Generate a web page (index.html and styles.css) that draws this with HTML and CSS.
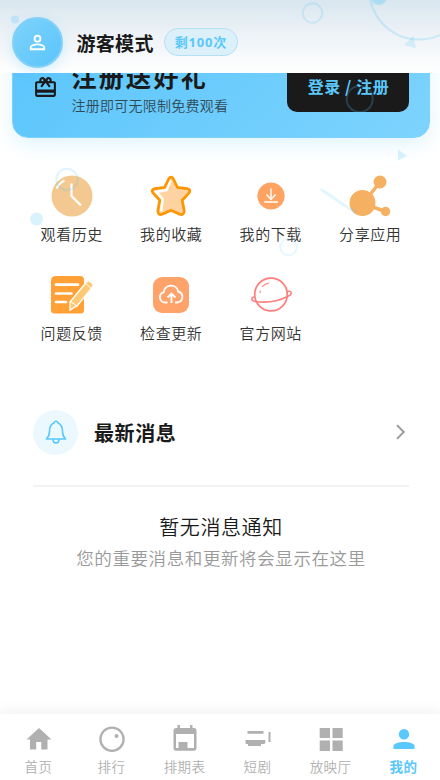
FILE: index.html
```html
<!DOCTYPE html>
<html lang="zh-CN">
<head>
<meta charset="utf-8">
<meta name="viewport" content="width=device-width, initial-scale=1">
<title>我的</title>
<link rel="stylesheet" href="styles.css">
</head>
<body>
<div class="app">
  <header class="header">
    <div class="avatar">
      <svg width="23" height="23" viewBox="0 0 24 24" fill="#fff"><path d="M12 5.9a2.1 2.1 0 1 1 0 4.2 2.1 2.1 0 0 1 0-4.2m0 9c2.97 0 6.1 1.46 6.1 2.1v1.1H5.9V17c0-.64 3.13-2.1 6.1-2.1M12 4a4 4 0 1 0 0 8 4 4 0 0 0 0-8m0 9c-2.67 0-8 1.34-8 4v3h16v-3c0-2.66-5.33-4-8-4"/></svg>
    </div>
    <h1 class="username">游客模式</h1>
    <span class="quota">剩100次</span>
  </header>

  <main class="content">
    <section class="banner">
      <svg class="gift" width="25" height="25" viewBox="0 0 24 24" fill="#1a1a1a"><path d="M20 6h-2.180c.11-.31.18-.65.18-1a3 3 0 0 0-5.500-1.650l-.5.67-.5-.68A3 3 0 0 0 6 5c0 .35.07.69.18 1H4c-1.110 0-1.990.89-1.990 2L2 19c0 1.110.89 2 2 2h16c1.110 0 2-.89 2-2V8c0-1.110-.89-2-2-2m-5-2c.55 0 1 .45 1 1s-.45 1-1 1-1-.45-1-1 .45-1 1-1M9 4c.55 0 1 .45 1 1s-.45 1-1 1-1-.45-1-1 .45-1 1-1m11 15H4v-2h16zm0-5H4V8h5.080L7 10.830 8.620 12 12 7.400l3.380 4.600L17 10.830 14.920 8H20z"/></svg>
      <div class="offer">
        <h2 class="offer-title">注册送好礼</h2>
        <p class="offer-text">注册即可无限制免费观看</p>
      </div>
      <button class="login">登录 / 注册</button>
    </section>

    <section class="menu">
      <div class="menu-item">
        <svg width="42" height="42" viewBox="0 0 42 42"><circle cx="21" cy="21" r="20.500" fill="#f3c891"/><path d="M20.500 8.500V21l9.500 9.500" fill="none" stroke="#fff" stroke-width="2.200"/><path d="M5.500 13.500Q8.500 8 13.500 5.500" fill="none" stroke="#fff" stroke-width="2"/></svg>
        <span>观看历史</span>
      </div>
      <div class="menu-item">
        <svg width="42" height="42" viewBox="-.5 -.5 43 43"><path d="M18.700 3.300Q21 0 23.300 3.300L27.500 12.200 37.500 13.500Q42 14.500 39.300 18L32.500 25.300 34.500 36Q34.500 41 30 39.700L21 35.500 12 39.700Q7.500 41 7.500 36L9.500 25.300 2.700 18Q0 14.500 4.500 13.500L14.500 12.200Z" fill="#ffd2a2"/><path d="M20.500 5L16.300 15 6 16.800 12.500 24.500 10.800 36.500" fill="none" stroke="#fff" stroke-width="2.800"/><path d="M18.700 3.300Q21 0 23.300 3.300L27.500 12.200 37.500 13.500Q42 14.500 39.300 18L32.500 25.300 34.500 36Q34.500 41 30 39.700L21 35.500 12 39.700Q7.500 41 7.500 36L9.500 25.300 2.700 18Q0 14.500 4.500 13.500L14.500 12.200Z" fill="none" stroke="#ff9500" stroke-width="2.800" stroke-linejoin="round"/></svg>
        <span>我的收藏</span>
      </div>
      <div class="menu-item">
        <svg width="42" height="42" viewBox="0 0 42 42"><circle cx="21" cy="21" r="13.600" fill="#ffa362"/><path d="M21 13.500V23.500M16.500 19.500L21 24.500 25.500 19.500M14.200 27H28" fill="none" stroke="#fff" stroke-width="1.400"/></svg>
        <span>我的下载</span>
      </div>
      <div class="menu-item">
        <svg width="42" height="42" viewBox="0 0 42 42"><path d="M14 28.500L31 7M14 28.500L36.500 36.500" stroke="#f5b061" stroke-width="3.500"/><circle cx="13.500" cy="28" r="13" fill="#f5b061"/><circle cx="31" cy="7" r="6.500" fill="#f5b061"/><circle cx="36.500" cy="36.500" r="4.700" fill="#f5b061"/></svg>
        <span>分享应用</span>
      </div>
      <div class="menu-item">
        <svg width="42" height="42" viewBox="0 0 42 42"><path d="M5 2H29Q33 2 33 6V36Q33 39.500 29.500 39.500H3.500Q0 39.500 0 36V7Q0 2 5 2" fill="#ffa136"/><path d="M5 10.700H27M5 19.500H20.500M5 28H15" stroke="#fff" stroke-width="2.700" stroke-linecap="round"/><path d="M19 28L35.500 8Q37 6 39 7.500L41 9Q43 11 41.500 13L26.500 31.500 19 36Z" fill="#ffc873" stroke="#fff" stroke-width="1.300"/><path d="M19.300 27.500L26.500 32M34.500 9.500L40.500 14.500" stroke="#fff" stroke-width="1"/></svg>
        <span>问题反馈</span>
      </div>
      <div class="menu-item">
        <svg width="42" height="42" viewBox="0 0 42 42"><rect x="3" y="3" width="36" height="36" rx="9" fill="#ffa36b"/><path d="M17.500 28.500H15.500A5.300 5.300 0 0 1 13.800 18.100C14.500 9.800 26.700 9.400 28.200 17.500A5.600 5.600 0 0 1 27 28.500H25M21.500 29V20M17.600 23.500L21.500 19.500 25.400 23.500" fill="none" stroke="#fff" stroke-width="1.900"/></svg>
        <span>检查更新</span>
      </div>
      <div class="menu-item">
        <svg width="42" height="42" viewBox="0 0 42 42" fill="none" stroke="#ff7d7b"><circle cx="21" cy="20.500" r="16.300" stroke-width="1.700"/><path d="M5 23C1 22.500.5 27 5 27.500Q23 30 37.500 22.500C43 20.500 42 15.500 37 18" stroke-width="1.500"/><path d="M12 13Q15 9.500 19 9M10 19L10.300 16.500" stroke-width="1.100"/></svg>
        <span>官方网站</span>
      </div>
    </section>

    <section class="news">
      <div class="news-head">
        <div class="bell">
          <svg width="24" height="26" viewBox="0 0 24 26" fill="none" stroke="#5ac8fa" stroke-width="1.600" stroke-linejoin="round"><path d="M12 2.200C13.300 2.200 13.800 3 14 4 17.500 5.300 18.500 8.500 18.500 12.500 18.500 16 19 17.500 21.500 20H2.500C5 17.500 5.500 16 5.500 12.500 5.500 8.500 6.500 5.300 10 4 10.200 3 10.700 2.200 12 2.200ZM9 20.500C9 25 15 25 15 20.500"/></svg>
        </div>
        <h2 class="news-title">最新消息</h2>
        <svg class="chevron" width="10" height="16" viewBox="0 0 10 16" fill="none" stroke="#999" stroke-width="1.900"><path d="M1 1.200L7.800 8 1 14.800"/></svg>
      </div>
      <div class="empty">
        <p class="empty-title">暂无消息通知</p>
        <p class="empty-text">您的重要消息和更新将会显示在这里</p>
      </div>
    </section>
  </main>

  <nav class="tabs">
    <div class="tab">
      <svg width="30" height="30" viewBox="0 0 30 30" fill="currentColor"><path d="M15 4L2.500 15.500H6V25.500H12.200V18H17.300V25.500H23.500V15.500H27.500Z"/></svg>
      <span>首页</span>
    </div>
    <div class="tab">
      <svg width="30" height="30" viewBox="0 0 30 30"><circle cx="15" cy="15.200" r="11.600" fill="none" stroke="currentColor" stroke-width="2.300"/><circle cx="19.500" cy="12" r="2" fill="currentColor"/></svg>
      <span>排行</span>
    </div>
    <div class="tab">
      <svg width="30" height="30" viewBox="0 0 30 30" fill="currentColor" fill-rule="evenodd"><path d="M7.500 1H10V4H20V1H22.500V4H24Q26.500 4 26.500 6.500V24Q26.500 26.700 24 26.700H6Q3.500 26.700 3.500 24V6.500Q3.500 4 6 4H7.500ZM6 10V24H24V10Z"/><path d="M8.500 18H17.500V24.500H8.500Z"/></svg>
      <span>排期表</span>
    </div>
    <div class="tab">
      <svg width="30" height="30" viewBox="0 0 30 30" fill="currentColor"><path d="M4.500 7H20.500V9.700H4.500ZM2.500 16H22.300V18.500L21.500 20H18V22H5V20H3L2.500 19ZM25.500 8H27.500V18H25.500Z"/></svg>
      <span>短剧</span>
    </div>
    <div class="tab">
      <svg width="30" height="30" viewBox="0 0 30 30" fill="currentColor"><path d="M3.700 4H14V14H3.700ZM16.500 4H26.700V14H16.500ZM3.700 16.500H14V27H3.700ZM16.500 16.500H26.700V27H16.500Z"/></svg>
      <span>放映厅</span>
    </div>
    <div class="tab active">
      <svg width="30" height="30" viewBox="0 0 30 30" fill="currentColor"><circle cx="15" cy="10.200" r="5.200"/><path d="M4.500 25V22C4.500 19.500 10 18 15 18S25.500 19.500 25.500 22V25Z"/></svg>
      <span>我的</span>
    </div>
  </nav>

  <svg class="decor" width="440" height="260" viewBox="0 0 440 260" fill="none">
    <g stroke="#5ac8fa" stroke-width="2">
      <circle cx="312.500" cy="13" r="9.700" opacity=".2"/>
      <circle cx="419" cy="-10" r="49.500" opacity=".25"/>
      <circle cx="359.700" cy="99" r="13" opacity=".22"/>
      <circle cx="67" cy="179.500" r="10.700" opacity=".2"/>
      <circle cx="288.500" cy="247" r="8.300" opacity=".14"/>
      <path d="M320.500 189L356 213" stroke-width="3" opacity=".17"/>
    </g>
    <g fill="#5ac8fa">
      <circle cx="15" cy="19.500" r="4" opacity=".25"/>
      <circle cx="379" cy="-2.500" r="7.500" opacity=".35"/>
      <circle cx="36.500" cy="219" r="6.500" opacity=".24"/>
      <path d="M404 45L413.500 35.500 416 48.500Z" opacity=".2"/>
      <path d="M398 149.500L407 156 398 160.500Z" opacity=".23"/>
    </g>
  </svg>
</div>
</body>
</html>
```
FILE: styles.css
```css
* {
  box-sizing: border-box;
  margin: 0;
  padding: 0;
}

body {
  background: #fff;
  color: #1a1a1a;
  font-family: "Noto Sans CJK SC", sans-serif;
  font-weight: 350;
}

svg {
  display: block;
  flex-shrink: 0;
}

.app {
  position: relative;
  display: flex;
  flex-direction: column;
  height: 780px;
  overflow: hidden;
}

.header {
  position: relative;
  z-index: 2;
  display: flex;
  align-items: center;
  flex-shrink: 0;
  height: 73px;
  padding: 11px 12px 0;
  background: linear-gradient(#d8e6ef, #eef3f7 50%, #fff);
}

.avatar {
  display: grid;
  place-items: center;
  width: 51px;
  height: 51px;
  border: 2px solid #80d0f7;
  border-radius: 50%;
  background: linear-gradient(135deg, #7ed3fb, #5ac4fb);
  box-shadow: 0 4px 12px rgba(90, 200, 250, .25);
}

.username {
  margin-left: 13.500px;
  padding-top: 2px;
  font-size: 19px;
  font-weight: 700;
  letter-spacing: .3px;
  line-height: 28px;
}

.quota {
  height: 28px;
  margin-left: 10px;
  padding: 0 10px;
  border: 1px solid #b4e1f6;
  border-radius: 14px;
  background: #dcf0fa;
  color: #5ac8fa;
  font-family: "Noto Sans", "Noto Sans CJK SC", sans-serif;
  font-size: 13px;
  font-weight: 700;
  letter-spacing: .8px;
  line-height: 26px;
}

.content {
  flex: 1;
}

.banner {
  display: flex;
  align-items: center;
  height: 102px;
  margin: -37px 10px 0 12px;
  padding: 0 20px;
  border: 1px solid #7ed1fb;
  border-radius: 16px;
  background: linear-gradient(135deg, #5ac5fc, #7dd3fd);
  box-shadow: 0 6px 20px rgba(90, 200, 250, .2);
}

.offer {
  flex: 1;
  margin-left: 13.500px;
}

.offer-title {
  font-size: 25px;
  font-weight: 700;
  letter-spacing: 2.300px;
  line-height: 34px;
}

.offer-text {
  padding-top: 2px;
  color: #304a58;
  font-size: 14px;
  letter-spacing: .25px;
  line-height: 20px;
}

.login {
  width: 122px;
  height: 50px;
  border: 0;
  border-radius: 10px;
  background: #1a1a1a;
  color: #5ac8fa;
  font: 700 16px/46px "Noto Sans CJK SC", sans-serif;
  letter-spacing: .6px;
  padding: 0 0 2px 1px;
}

.menu {
  display: grid;
  grid-template-columns: repeat(4, 1fr);
  row-gap: 27px;
  margin: 36.500px 20px 0 22px;
}

.menu-item {
  display: flex;
  flex-direction: column;
  align-items: center;
  gap: 6.500px;
  height: 72px;
  color: #333;
  font-size: 15px;
  letter-spacing: .6px;
  line-height: 22px;
}

.news {
  margin: 63.500px 31px 0 33px;
}

.news-head {
  display: flex;
  align-items: center;
  height: 78px;
  padding-bottom: 30px;
  border-bottom: 2px solid #f2f2f3;
}

.bell {
  display: grid;
  place-items: center;
  width: 45px;
  height: 45px;
  border-radius: 50%;
  background: #ebf8fe;
}

.news-title {
  flex: 1;
  margin-left: 16px;
  padding-top: 1px;
  font-size: 20px;
  font-weight: 700;
  letter-spacing: .6px;
}

.chevron {
  margin-right: 3px;
}

.empty {
  padding-top: 24px;
  text-align: center;
}

.empty-title {
  font-size: 20px;
  letter-spacing: .6px;
  line-height: 32px;
}

.empty-text {
  color: #999;
  font-size: 17.500px;
  letter-spacing: .6px;
  line-height: 30px;
}

.tabs {
  display: flex;
  height: 66px;
  padding: 10px 0 0 2px;
  background: #fff;
  box-shadow: 0 -3px 14px rgba(0, 0, 0, .06);
}

.tab {
  display: flex;
  flex: 1;
  flex-direction: column;
  align-items: center;
  gap: 2px;
  color: #b0b0b0;
  font-size: 13.500px;
  letter-spacing: .4px;
  line-height: 20px;
}

.active {
  color: #5ac8fa;
  font-weight: 700;
}

.decor {
  position: absolute;
  inset: 0 auto auto 0;
  z-index: 3;
  pointer-events: none;
}
```
